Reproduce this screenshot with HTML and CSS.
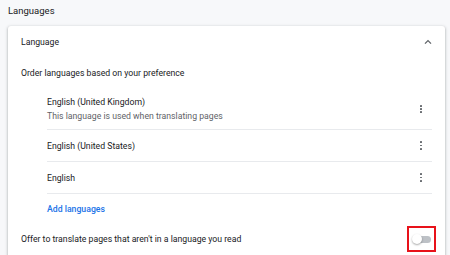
FILE: index.html
```html
<!DOCTYPE html>
<html>
<head>
<meta charset="utf-8">
<link rel="stylesheet" href="styles.css">
</head>
<body>
<div class="page">
  <div class="section-title">Languages</div>
  <div class="card">
    <div class="header-row">
      <span class="header-label">Language</span>
      <svg class="chevron" width="8" height="6" viewBox="0 0 8 6"><path d="M1 4.6 L4 1.6 L7 4.6" fill="none" stroke="#5f6368" stroke-width="1.3"/></svg>
    </div>
    <div class="text-row">Order languages based on your preference</div>
    <div class="lang-list">
      <div class="lang-item two-line">
        <div class="lang-text">
          <div class="lang-name">English (United Kingdom)</div>
          <div class="lang-sub">This language is used when translating pages</div>
        </div>
        <span class="kebab"><i></i><i></i><i></i></span>
      </div>
      <div class="lang-item">
        <div class="lang-name">English (United States)</div>
        <span class="kebab"><i></i><i></i><i></i></span>
      </div>
      <div class="lang-item">
        <div class="lang-name">English</div>
        <span class="kebab"><i></i><i></i><i></i></span>
      </div>
      <div class="lang-item add-row">
        <span class="add-link">Add languages</span>
      </div>
    </div>
    <div class="toggle-row">
      <span>Offer to translate pages that aren't in a language you read</span>
      <span class="highlight"><span class="toggle"><span class="knob"></span></span></span>
    </div>
  </div>
</div>
</body>
</html>
```
FILE: styles.css
```css
html, body {
  margin: 0;
  padding: 0;
  background: #f7f8fa;
  font-family: Roboto, "Liberation Sans", sans-serif;
  color: #202124;
  font-size: 8.7px;
  overflow: hidden;
}
.page {
  padding: 0 5px 0 8px;
  height: 255px;
  overflow: hidden;
}
.section-title {
  height: 26px;
  line-height: 21px;
  font-size: 9.5px;
  color: #202124;
}
.card {
  background: #fff;
  border-radius: 3px;
  box-shadow: 0 1px 2px rgba(60,64,67,.3), 0 1px 3px 1px rgba(60,64,67,.15);
  padding: 0 13px 0 13px;
  height: 240px;
}
.header-row {
  height: 32px;
  display: flex;
  align-items: center;
  justify-content: space-between;
}
.text-row {
  height: 30px;
  display: flex;
  align-items: center;
}
.lang-list {
  padding-left: 26px;
}
.lang-item {
  display: flex;
  align-items: center;
  justify-content: space-between;
  height: 32px;
  border-top: 1px solid #e8eaed;
  box-sizing: border-box;
}
.lang-item.two-line {
  height: 41px;
  border-top: none;
  padding-top: 1px;
}
.lang-sub {
  color: #5f6368;
  margin-top: 4px;
}
.kebab {
  display: flex;
  flex-direction: column;
  gap: 1.6px;
  margin-right: 10px;
}
.kebab i {
  display: block;
  width: 1.7px;
  height: 1.7px;
  border-radius: 50%;
  background: #5f6368;
}
.add-row {
  height: 31px;
}
.add-link {
  color: #1a73e8;
  font-weight: 500;
}
.toggle-row {
  height: 30px;
  display: flex;
  align-items: center;
  justify-content: space-between;
}
.highlight {
  display: flex;
  align-items: center;
  justify-content: center;
  width: 25px;
  height: 22px;
  border: 2.5px solid #e8121a;
  margin-right: -4px;
}
.toggle {
  position: relative;
  width: 16px;
  height: 7px;
  border-radius: 4px;
  background: #bdc1c6;
  margin-left: 2px;
}
.knob {
  position: absolute;
  left: -3px;
  top: -2px;
  width: 10px;
  height: 10px;
  border-radius: 50%;
  background: #fff;
  box-shadow: 0 1px 2px rgba(0,0,0,.35);
}
```
